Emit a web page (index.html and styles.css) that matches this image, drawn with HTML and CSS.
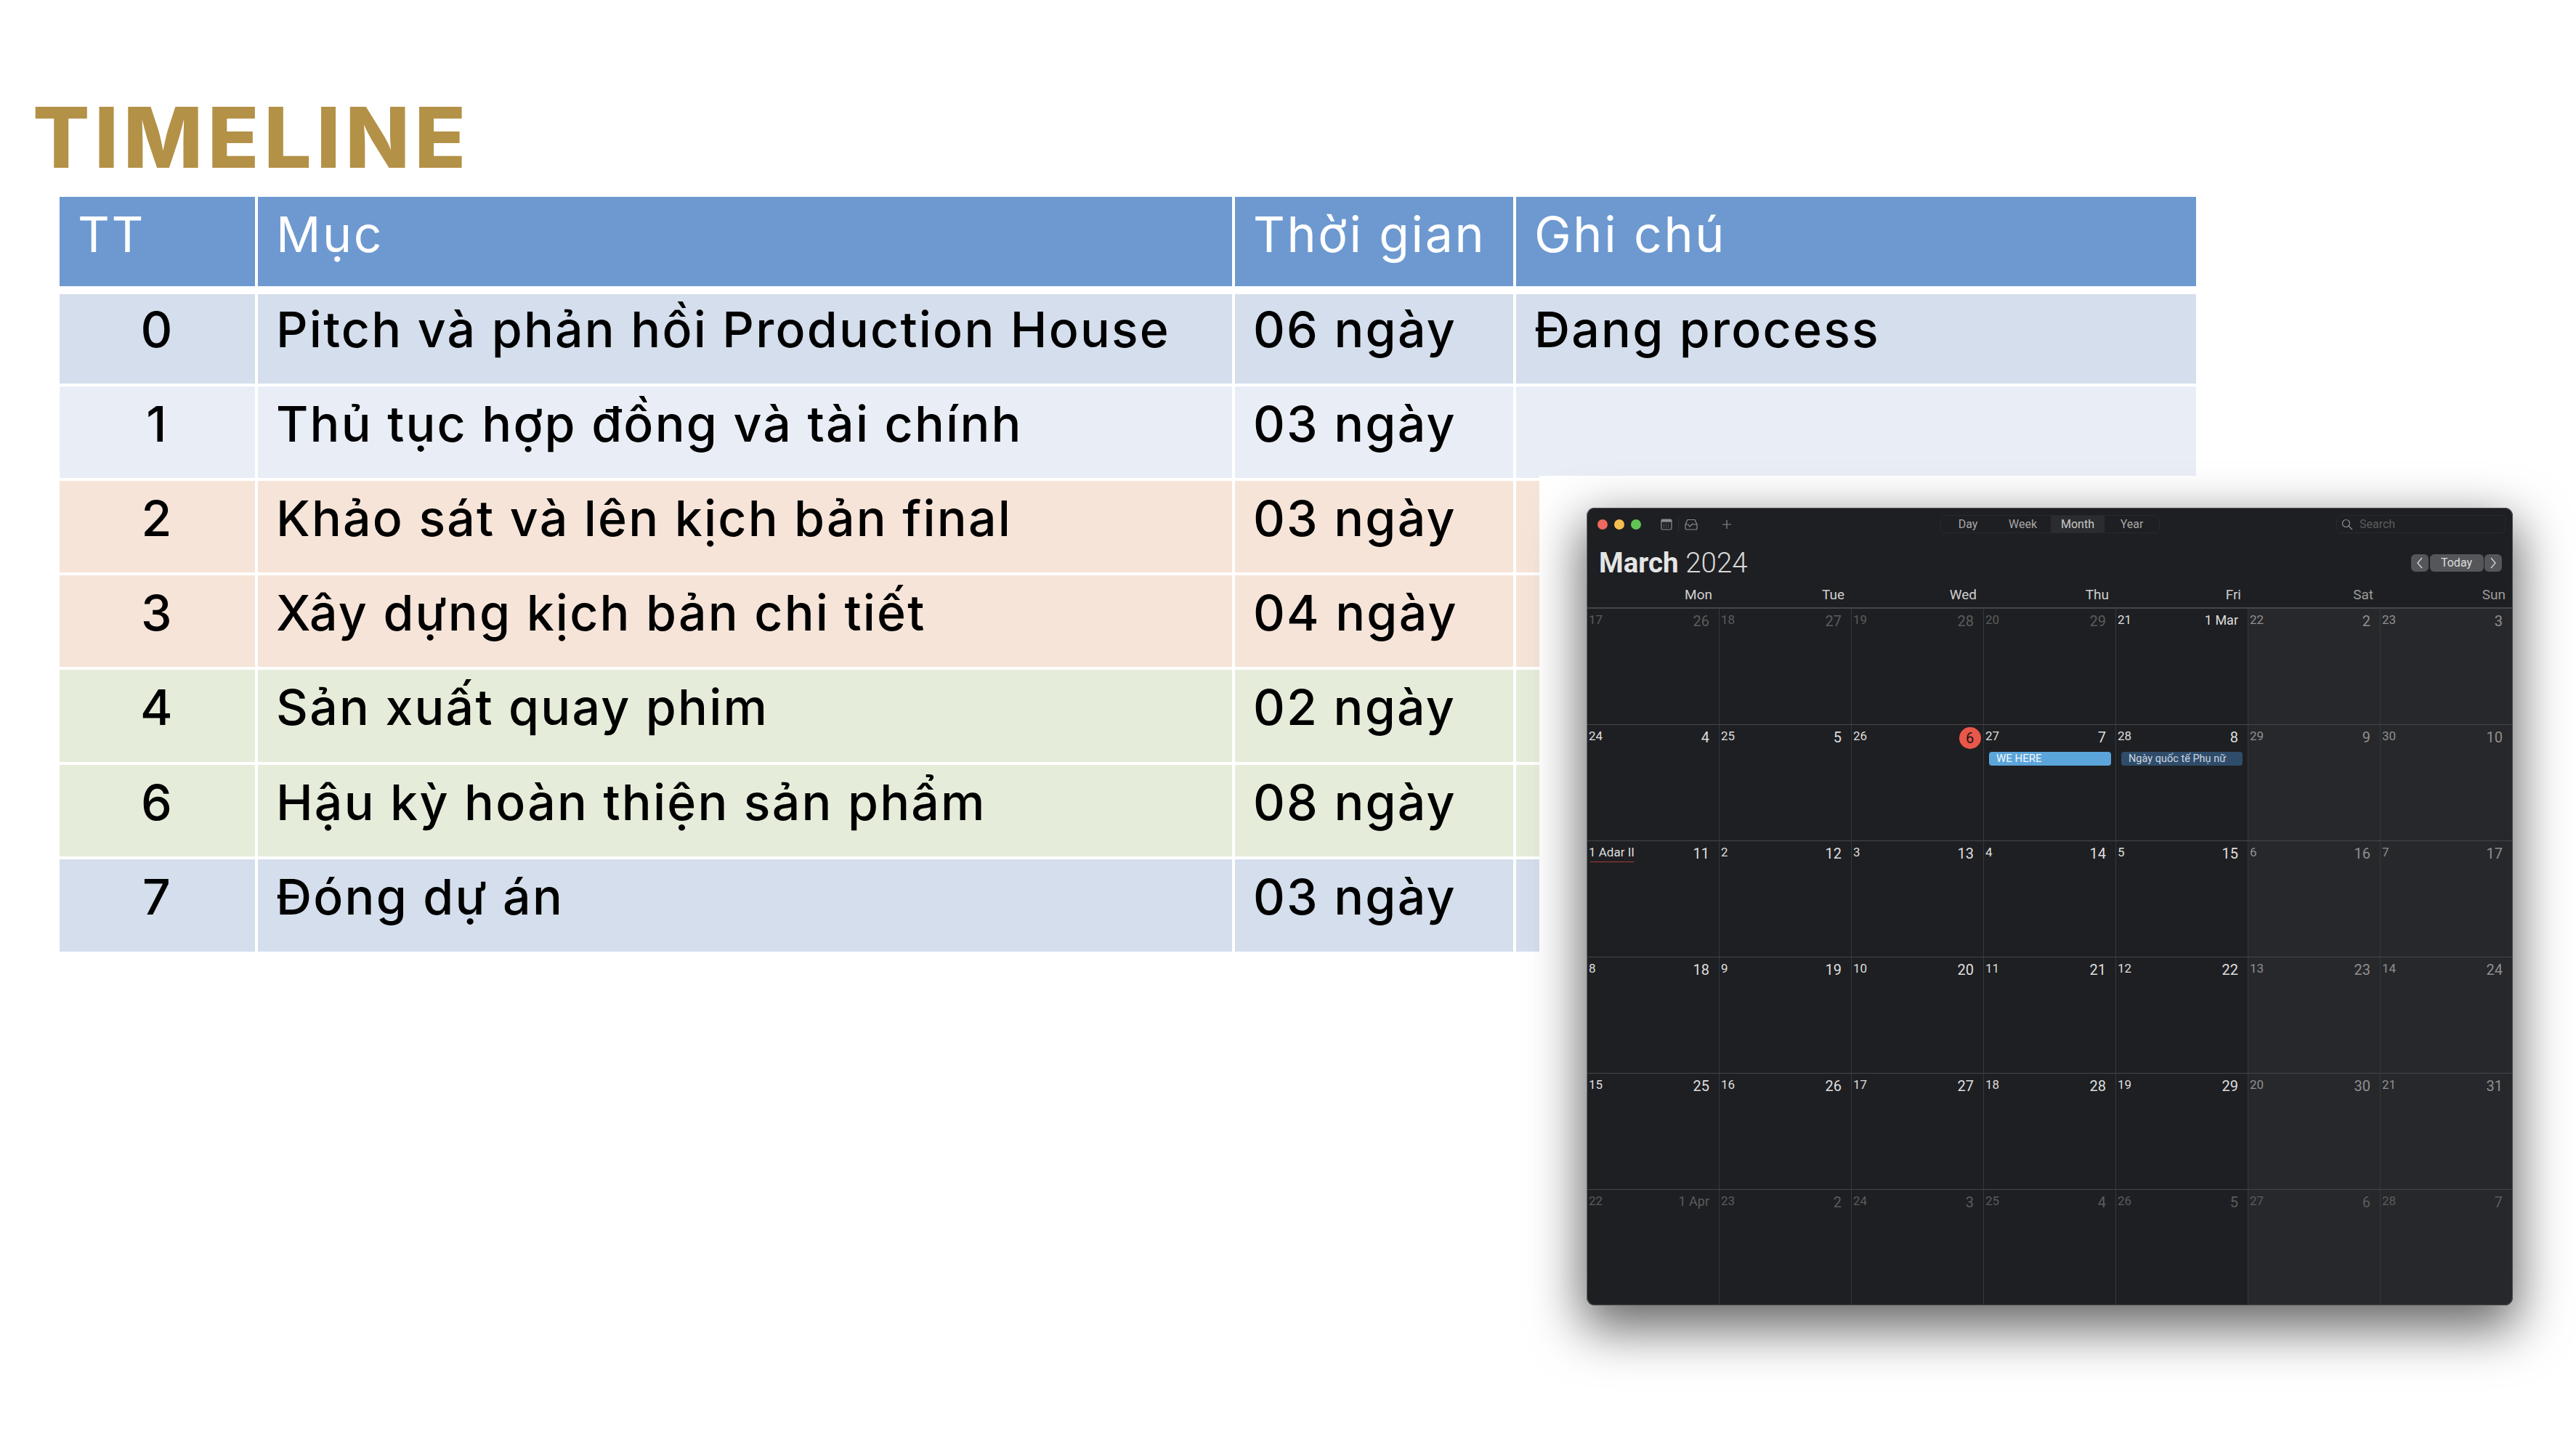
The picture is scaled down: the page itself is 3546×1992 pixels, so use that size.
FILE: index.html
```html
<!DOCTYPE html>
<html lang="vi">
<head>
<meta charset="utf-8">
<title>Timeline</title>
<link rel="stylesheet" href="styles.css">
</head>
<body>
<main class="page">
  <h1 class="title">TIMELINE</h1>
  <table class="plan">
    <colgroup><col class="c1"><col class="c2"><col class="c3"><col class="c4"></colgroup>
    <thead>
      <tr><th>TT</th><th>Mục</th><th>Thời gian</th><th>Ghi chú</th></tr>
    </thead>
    <tbody>
      <tr class="first blue"><td class="num">0</td><td>Pitch và phản hồi Production House</td><td>06 ngày</td><td>Đang process</td></tr>
      <tr class="pale"><td class="num">1</td><td>Thủ tục hợp đồng và tài chính</td><td>03 ngày</td><td></td></tr>
      <tr class="peach"><td class="num">2</td><td>Khảo sát và lên kịch bản final</td><td>03 ngày</td><td></td></tr>
      <tr class="peach"><td class="num">3</td><td>Xây dựng kịch bản chi tiết</td><td>04 ngày</td><td></td></tr>
      <tr class="green tall"><td class="num">4</td><td>Sản xuất quay phim</td><td>02 ngày</td><td></td></tr>
      <tr class="green"><td class="num">6</td><td>Hậu kỳ hoàn thiện sản phẩm</td><td>08 ngày</td><td></td></tr>
      <tr class="blue last"><td class="num">7</td><td>Đóng dự án</td><td>03 ngày</td><td></td></tr>
    </tbody>
  </table>

  <aside class="shot">
    <section class="win">
      <header class="bar">
        <div class="bar-left">
          <i class="light red"></i><i class="light amber"></i><i class="light lime"></i>
          <svg class="ico cal-ico" width="16" height="16" viewBox="0 0 16 16"><rect x="1" y="1" width="14" height="14" rx="1.5" fill="none" stroke="#8b8c8e" stroke-width="1.2"/><rect x="1" y="1" width="14" height="3.6" fill="#8b8c8e"/><path d="M4 7h1M7 7h1M10 7h1M4 9.5h1M7 9.5h1M10 9.5h1M4 12h1M7 12h1M10 12h1" stroke="#8b8c8e" stroke-width="1.1"/></svg>
          <i class="sep"></i>
          <svg class="ico" width="18" height="16" viewBox="0 0 18 16"><path d="M4 1.5h10l3 6.5v5a2 2 0 0 1-2 2H3a2 2 0 0 1-2-2V8z" fill="none" stroke="#8b8c8e" stroke-width="1.2"/><path d="M1 8h4l2 3 4-4 2 1h4" fill="none" stroke="#8b8c8e" stroke-width="1.2"/></svg>
          <svg class="ico plus" width="14" height="14" viewBox="0 0 14 14"><path d="M7 1v12M1 7h12" stroke="#8b8c8e" stroke-width="1.2"/></svg>
        </div>
        <nav class="seg">
          <span class="s-day">Day</span><span class="s-week">Week</span><span class="s-month">Month</span><span class="s-year">Year</span>
        </nav>
        <span></span>
        <div class="search">
          <svg width="16" height="16" viewBox="0 0 16 16"><circle cx="6.5" cy="6.5" r="5" fill="none" stroke="#8b8c8e" stroke-width="1.2"/><path d="M10.2 10.2 15 15" stroke="#8b8c8e" stroke-width="1.3"/></svg>
          <span>Search</span>
        </div>
      </header>
      <div class="head">
        <div class="month"><b>March</b> <span>2024</span></div>
        <div class="nav">
          <span class="nav-arrow"><svg width="10" height="16" viewBox="0 0 10 16"><path d="M8 1 2 8l6 7" fill="none" stroke="#d8d8d8" stroke-width="1.3"/></svg></span>
          <span class="nav-today">Today</span>
          <span class="nav-arrow"><svg width="10" height="16" viewBox="0 0 10 16"><path d="m2 1 6 7-6 7" fill="none" stroke="#d8d8d8" stroke-width="1.3"/></svg></span>
        </div>
      </div>
      <div class="days">
        <span>Mon</span><span>Tue</span><span>Wed</span><span>Thu</span><span>Fri</span><span class="wk">Sat</span><span class="wk">Sun</span>
      </div>
      <div class="grid">
        <div class="cell dim"><span>17</span><span class="d">26</span></div>
        <div class="cell dim"><span>18</span><span class="d">27</span></div>
        <div class="cell dim"><span>19</span><span class="d">28</span></div>
        <div class="cell dim"><span>20</span><span class="d">29</span></div>
        <div class="cell"><span>21</span><span class="d lbl">1 Mar</span></div>
        <div class="cell we"><span>22</span><span class="d">2</span></div>
        <div class="cell we"><span>23</span><span class="d">3</span></div>

        <div class="cell"><span>24</span><span class="d">4</span></div>
        <div class="cell"><span>25</span><span class="d">5</span></div>
        <div class="cell"><span>26</span><span class="d today">6</span></div>
        <div class="cell"><span>27</span><span class="d">7</span><em class="ev ev-a">WE HERE</em></div>
        <div class="cell"><span>28</span><span class="d">8</span><em class="ev ev-b">Ngày quốc tế Phụ nữ</em></div>
        <div class="cell we"><span>29</span><span class="d">9</span></div>
        <div class="cell we"><span>30</span><span class="d">10</span></div>

        <div class="cell"><span class="adar">1 Adar II</span><span class="d">11</span></div>
        <div class="cell"><span>2</span><span class="d">12</span></div>
        <div class="cell"><span>3</span><span class="d">13</span></div>
        <div class="cell"><span>4</span><span class="d">14</span></div>
        <div class="cell"><span>5</span><span class="d">15</span></div>
        <div class="cell we"><span>6</span><span class="d">16</span></div>
        <div class="cell we"><span>7</span><span class="d">17</span></div>

        <div class="cell"><span>8</span><span class="d">18</span></div>
        <div class="cell"><span>9</span><span class="d">19</span></div>
        <div class="cell"><span>10</span><span class="d">20</span></div>
        <div class="cell"><span>11</span><span class="d">21</span></div>
        <div class="cell"><span>12</span><span class="d">22</span></div>
        <div class="cell we"><span>13</span><span class="d">23</span></div>
        <div class="cell we"><span>14</span><span class="d">24</span></div>

        <div class="cell"><span>15</span><span class="d">25</span></div>
        <div class="cell"><span>16</span><span class="d">26</span></div>
        <div class="cell"><span>17</span><span class="d">27</span></div>
        <div class="cell"><span>18</span><span class="d">28</span></div>
        <div class="cell"><span>19</span><span class="d">29</span></div>
        <div class="cell we"><span>20</span><span class="d">30</span></div>
        <div class="cell we"><span>21</span><span class="d">31</span></div>

        <div class="cell dim"><span>22</span><span class="d lbl">1 Apr</span></div>
        <div class="cell dim"><span>23</span><span class="d">2</span></div>
        <div class="cell dim"><span>24</span><span class="d">3</span></div>
        <div class="cell dim"><span>25</span><span class="d">4</span></div>
        <div class="cell dim"><span>26</span><span class="d">5</span></div>
        <div class="cell dim we"><span>27</span><span class="d">6</span></div>
        <div class="cell dim we"><span>28</span><span class="d">7</span></div>
      </div>
    </section>
  </aside>
</main>
</body>
</html>
```

FILE: styles.css
```css
* { box-sizing: border-box; }
html, body { margin: 0; background: #fff; }
.page {
  position: relative;
  width: 3546px;
  height: 1992px;
  padding: 108px 0 0 82px;
  overflow: hidden;
  font-family: Inter, "Liberation Sans", sans-serif;
}
.title {
  margin: 0 0 0 -37px;
  font-size: 116px;
  line-height: 163px;
  font-weight: 800;
  color: #b39147;
  letter-spacing: 6.6px;
}

/* table */
.plan {
  width: 2941px;
  table-layout: fixed;
  border-collapse: separate;
  border-spacing: 0;
  font-size: 68px;
  line-height: 80px;
  letter-spacing: 2.2px;
  color: #000;
}
.c1 { width: 273px; }
.c2 { width: 1345px; }
.c3 { width: 387px; }
.c4 { width: 936px; }
.plan th, .plan td {
  height: 130px;
  padding: 11px 0 0 25px;
  border-right: 4px solid #fff;
  border-bottom: 4px solid #fff;
  vertical-align: top;
  text-align: left;
  font-weight: 500;
}
.plan th:last-child, .plan td:last-child { border-right: 0; }
.plan th {
  height: 134px;
  background: #6d99d0;
  color: #fff;
  font-weight: 400;
  letter-spacing: 2.6px;
  border-bottom-width: 11px;
}
.plan .num { padding-left: 0; text-align: center; }
.plan .first td { height: 127px; padding-top: 8px; }
.plan .tall td { height: 131px; }
.plan .last td { border-bottom: 0; height: 127px; }
.blue td { background: #d4deec; }
.pale td { background: #e9eef6; }
.peach td { background: #f6e4d8; }
.green td { background: #e5edda; }

/* screenshot */
.shot {
  position: absolute;
  left: 2119px;
  top: 655px;
  right: 0;
  bottom: 0;
  padding: 44px 0 0 65px;
  background: #fff;
}
.win {
  position: relative;
  width: 1275px;
  height: 1098px;
  display: flex;
  flex-direction: column;
  background: #1e1f22;
  border-radius: 11px;
  overflow: hidden;
  font-family: Roboto, "Liberation Sans", sans-serif;
  color: #e6e6e6;
  box-shadow: 0 26px 70px 6px rgba(0, 0, 0, .6);
}
.win::after {
  content: "";
  position: absolute;
  inset: 0;
  border: 1px solid #4c4d4f;
  border-left-color: #6d6e70;
  border-radius: 11px;
  pointer-events: none;
}

.bar {
  height: 47px;
  flex: none;
  display: grid;
  grid-template-columns: 487px 302px 1fr 233px 10px;
  align-items: start;
  padding-top: 10px;
}
.bar-left {
  display: flex;
  align-items: center;
  height: 25px;
  padding-left: 15px;
}
.light { width: 14px; height: 14px; border-radius: 50%; margin-right: 9px; }
.red { background: #ed6a5e; }
.amber { background: #f4bf4f; }
.lime { background: #61c554; }
.cal-ico { margin-left: 18px; }
.sep { width: 1px; height: 20px; background: #2e2f32; margin: 0 8px 0 8px; }
.plus { margin-left: 33px; }
.seg {
  display: flex;
  height: 25px;
  border: 1px solid #28292c;
  border-radius: 6px;
  font-size: 16px;
  line-height: 23px;
  color: #a6a6a6;
  text-align: center;
}
.s-day { width: 74px; }
.s-week { width: 77px; }
.s-month { width: 74px; background: #2b2c2f; color: #c8c8c8; }
.s-year { width: 75px; }
.search {
  display: flex;
  align-items: center;
  gap: 9px;
  height: 25px;
  padding-left: 6px;
  border: 1px solid #28292c;
  border-radius: 6px;
  font-size: 16px;
  color: #5b5c5e;
}

.head {
  height: 52px;
  flex: none;
  display: flex;
  justify-content: space-between;
  padding: 0 15px 0 17px;
}
.month { font-size: 38.5px; line-height: 58px; }
.month b { font-weight: 700; color: #e5e5e6; }
.month span { font-weight: 300; color: #d8d8d8; }
.nav { display: flex; gap: 1.5px; margin-top: 17px; height: 24px; font-size: 16px; line-height: 24px; color: #dcdcdc; }
.nav-arrow, .nav-today { background: #55565a; border-radius: 6px; text-align: center; }
.nav-arrow { width: 24px; display: flex; align-items: center; justify-content: center; }
.nav-today { width: 74px; }

.days {
  height: 38px;
  flex: none;
  display: grid;
  grid-template-columns: repeat(7, 182px);
  font-size: 19px;
  line-height: 41px;
  color: #cfcfcf;
  text-align: right;
}
.days span { padding-right: 9px; }
.days .wk { color: #9c9c9c; }

.grid {
  flex: 1;
  display: grid;
  grid-template-columns: repeat(7, 182px);
  grid-template-rows: repeat(5, 160px) 1fr;
  border-top: 1px solid #454648;
}
.cell {
  position: relative;
  display: flex;
  justify-content: space-between;
  align-items: flex-start;
  padding: 5px 13px 0 2px;
  border-top: 1px solid #454648;
  border-left: 1px solid #37383a;
  font-size: 17px;
  line-height: 20px;
  color: #dedede;
}
.cell:nth-child(7n+1) { border-left: 0; padding-left: 3px; }
.d { font-size: 20px; line-height: 24px; }
.lbl { font-size: 18px; margin-top: -1px; }
.we { background: #27282b; color: #8f8f90; }
.dim { color: #5b5c5e; }
.today {
  width: 30px;
  height: 30px;
  margin: -2px -9.5px 0 0;
  border-radius: 50%;
  background: #e9574a;
  color: #141414;
  line-height: 30px;
  text-align: center;
}
.adar { position: relative; }
.adar::after {
  content: "";
  position: absolute;
  left: 2px;
  right: 1px;
  bottom: -4px;
  height: 1.5px;
  background: #a83c35;
}
.ev {
  position: absolute;
  left: 7px;
  top: 37px;
  height: 19px;
  font-style: normal;
  font-size: 14.5px;
  line-height: 19px;
  border-radius: 4px;
  padding-left: 10px;
  white-space: nowrap;
}
.ev-a { width: 168px; background: #5ba5da; color: #f2f7fb; font-size: 15px; }
.ev-b { width: 167px; background: #2f4c6b; color: #cdd6df; }
```
